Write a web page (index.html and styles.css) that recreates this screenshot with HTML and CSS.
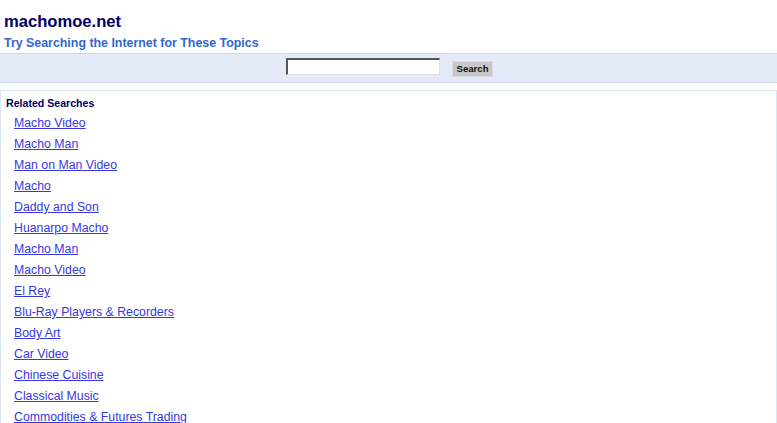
FILE: index.html
```html
<!DOCTYPE html>
<html>
<head>
<meta charset="utf-8">
<title>machomoe.net</title>
<link rel="stylesheet" href="styles.css">
</head>
<body>
<div class="header">
  <div class="site">machomoe.net</div>
  <div class="tag">Try Searching the Internet for These Topics</div>
</div>
<form class="searchbar">
  <input class="q" type="text">
  <button class="btn" type="button">Search</button>
</form>
<div class="results">
  <div class="rtitle">Related Searches</div>
  <ul class="links">
    <li><a href="#">Macho Video</a></li>
    <li><a href="#">Macho Man</a></li>
    <li><a href="#">Man on Man Video</a></li>
    <li><a href="#">Macho</a></li>
    <li><a href="#">Daddy and Son</a></li>
    <li><a href="#">Huanarpo Macho</a></li>
    <li><a href="#">Macho Man</a></li>
    <li><a href="#">Macho Video</a></li>
    <li><a href="#">El Rey</a></li>
    <li><a href="#">Blu-Ray Players &amp; Recorders</a></li>
    <li><a href="#">Body Art</a></li>
    <li><a href="#">Car Video</a></li>
    <li><a href="#">Chinese Cuisine</a></li>
    <li><a href="#">Classical Music</a></li>
    <li><a href="#">Commodities &amp; Futures Trading</a></li>
  </ul>
</div>
</body>
</html>
```
FILE: styles.css
```css
html, body {
  margin: 0;
  padding: 0;
  background: #ffffff;
  font-family: "Liberation Sans", Arial, sans-serif;
}
.header {
  padding: 12px 4px 0 4px;
}
.site {
  font-size: 16.6px;
  font-weight: bold;
  color: #000066;
  line-height: 20px;
}
.tag {
  font-size: 12.4px;
  font-weight: bold;
  color: #3366cc;
  line-height: 16px;
  margin-top: 3px;
}
.searchbar {
  margin: 2px 0 0 0;
  height: 28px;
  background: #e4eaf8;
  border-top: 1px solid #c9d6f2;
  border-bottom: 1px solid #c9d6f2;
  display: flex;
  justify-content: center;
  align-items: center;
  gap: 12px;
  padding: 0 0 0 2px;
}
.q {
  box-sizing: border-box;
  width: 154px;
  height: 17px;
  margin: 0 0 3px 0;
  padding: 0;
  border: 1px solid #e0e0e0;
  border-top: 2px solid #555555;
  border-left: 2px solid #555555;
  background: #ffffff;
}
.btn {
  box-sizing: border-box;
  width: 41px;
  height: 16px;
  margin: 1px 0 0 0;
  padding: 0;
  background: #c8c8c8;
  border: 1px solid #dcdcdc;
  font-family: "Liberation Sans", Arial, sans-serif;
  font-size: 9.6px;
  font-weight: bold;
  color: #111111;
  line-height: 14px;
}
.results {
  margin-top: 7px;
  border: 1px solid #dce6fb;
  border-bottom: none;
  padding: 5px 0 0 5px;
}
.rtitle {
  font-size: 10.6px;
  font-weight: bold;
  color: #000066;
  line-height: 14px;
}
.links {
  list-style: none;
  margin: 3px 0 0 0;
  padding: 0 0 0 8px;
}
.links li {
  font-size: 12.3px;
  line-height: 21px;
}
.links a {
  color: #3838e0;
  text-decoration: underline;
}
```
